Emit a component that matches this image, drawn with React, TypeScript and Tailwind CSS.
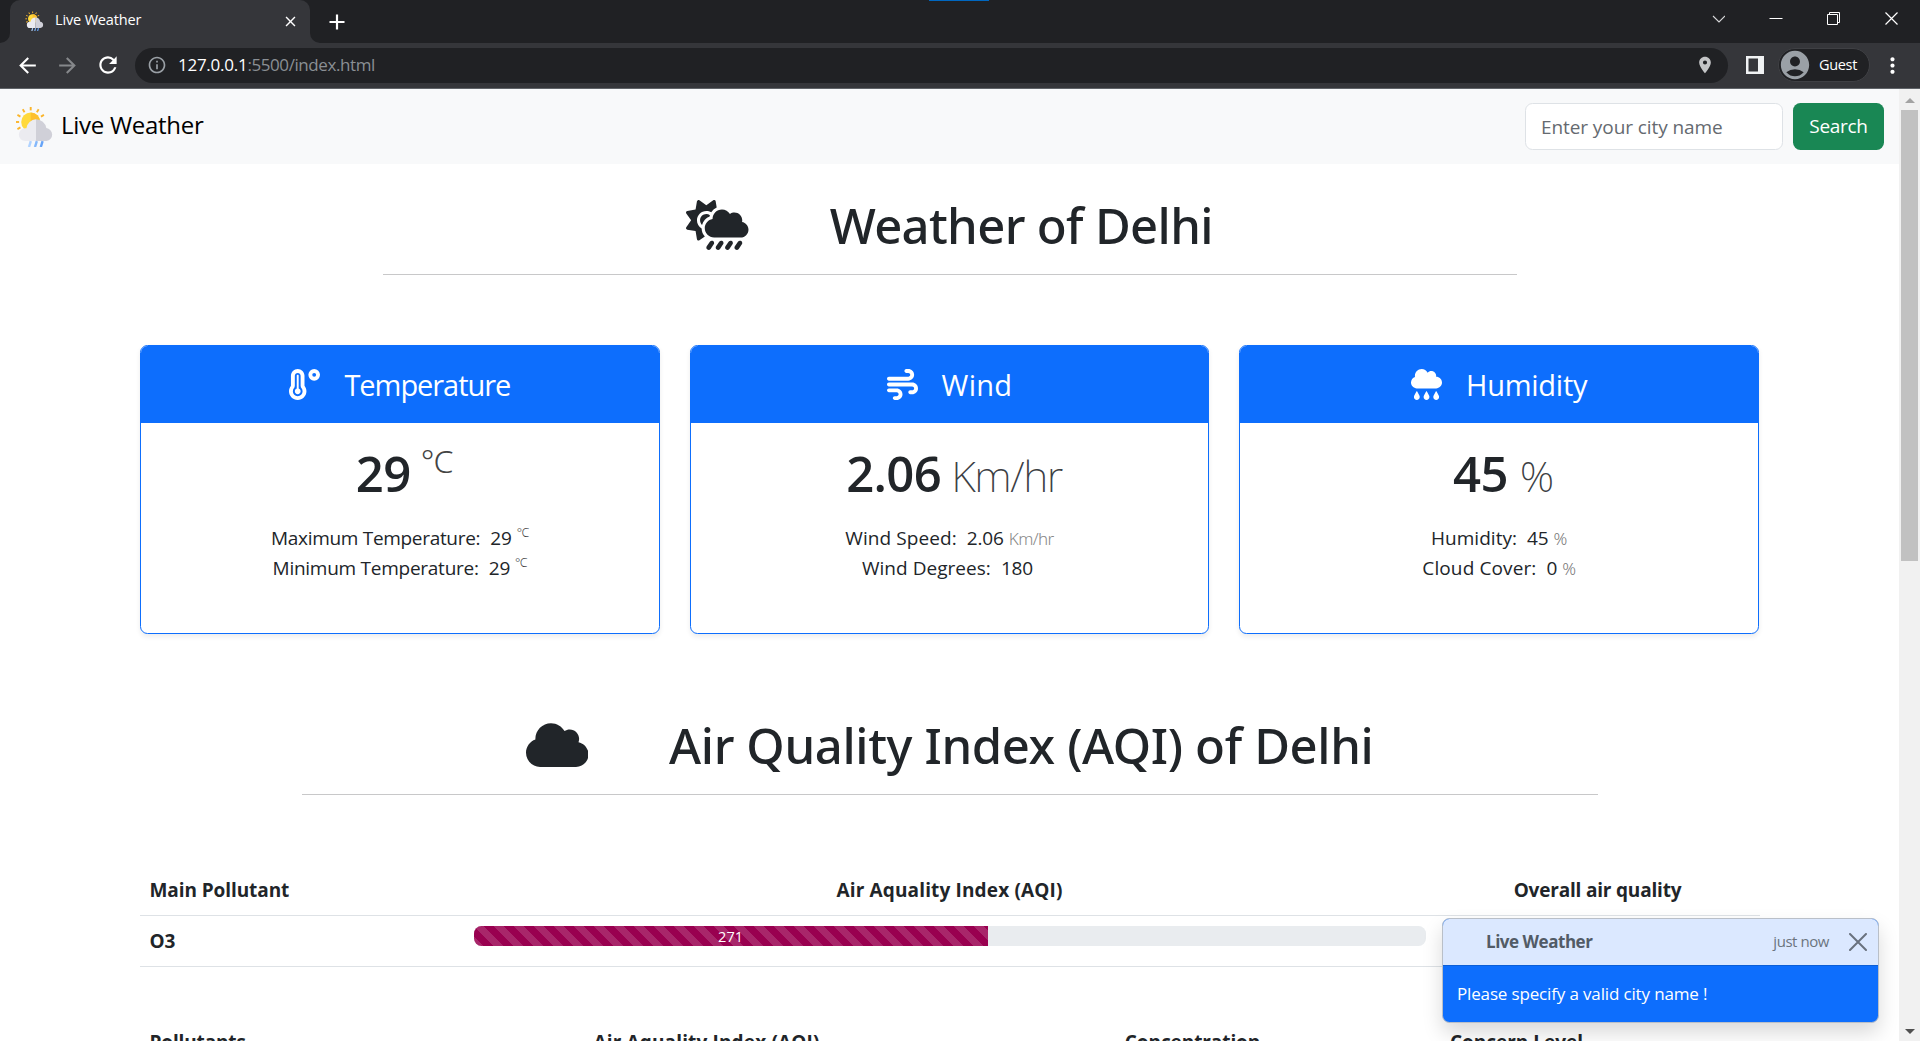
import React from "react";
import {
  FaCloud,
  FaCloudRain,
  FaCloudSunRain,
  FaTemperatureHigh,
  FaWind,
} from "react-icons/fa6";
import {
  MdAccountCircle,
  MdArrowBack,
  MdArrowForward,
  MdClose,
  MdLocationOn,
  MdMoreVert,
  MdOutlineInfo,
  MdRefresh,
} from "react-icons/md";

function WeatherLogo({ className }: { className: string }) {
  const rays = [-118, -90, -62, -32, 0, 32, 62];
  return (
    <svg viewBox="0 0 37 41" className={className} aria-hidden="true">
      {rays.map((a) => (
        <path
          key={a}
          d="M14.7 1v3.4"
          stroke="#fbb52a"
          strokeWidth="1.9"
          transform={`rotate(${a} 14.7 16)`}
        />
      ))}
      <circle cx="14.7" cy="16" r="9.5" fill="#ffd93b" />
      <path d="M14.7 6.5a9.5 9.5 0 0 1 0 19z" fill="#fdbf2d" />
      <path
        d="M9.3 35a6.4 6.4 0 0 1-.2-12.8 3 3 0 0 1 1.3 0A10.3 10.3 0 0 1 20 13.3V35z"
        fill="#ebebf0"
      />
      <path
        d="M20 13.3a10.5 10.5 0 0 1 10.3 8.8 6.5 6.5 0 0 1 .3 12.9H20z"
        fill="#d0d0d8"
      />
      <path d="M14.8 35.2 13 41" stroke="#b0d3ff" strokeWidth="2.4" />
      <path d="M20.8 35.2 19 41" stroke="#84b8fb" strokeWidth="2.4" />
      <path d="M26.6 35.2 24.8 41" stroke="#66a4f8" strokeWidth="2.4" />
    </svg>
  );
}

function TabStrip() {
  return (
    <div className="relative flex h-[43px] shrink-0 items-center bg-[#202124]">
      <div className="absolute left-[929px] top-0 h-px w-[60px] bg-[#0067c0]" />
      <svg viewBox="0 0 10 10" className="size-2.5 self-end" aria-hidden="true">
        <path d="M10 0v10H0A10 10 0 0 0 10 0z" fill="#35363a" />
      </svg>
      <div className="flex h-full w-[300px] items-center rounded-t-[10px] bg-[#35363a] pb-px pl-[15px] pr-[11px]">
        <WeatherLogo className="h-5 w-[19px]" />
        <span className="mb-0.5 ml-[11px] grow text-[14.5px] tracking-[-0.15px] text-white">Live Weather</span>
        <MdClose className="size-[17px] text-white" />
      </div>
      <svg viewBox="0 0 10 10" className="size-2.5 self-end" aria-hidden="true">
        <path d="M0 0v10h10A10 10 0 0 1 0 0z" fill="#35363a" />
      </svg>
      <svg viewBox="0 0 16 16" className="ml-[9px] size-4" aria-hidden="true">
        <path d="M8 .5v15M.5 8h15" stroke="#fff" strokeWidth="2.2" />
      </svg>
      <div className="ml-auto flex items-center gap-11 pb-[5px] pr-[21px]">
        <svg viewBox="0 0 14 14" className="size-3.5" aria-hidden="true">
          <path d="M2 4l6 6 6-6" fill="none" stroke="#d8d9db" strokeWidth="1.1" />
        </svg>
        <svg viewBox="0 0 14 14" className="size-3.5" aria-hidden="true">
          <path d="M0.5 6.5h13" stroke="#fff" />
        </svg>
        <svg viewBox="0 0 14 14" className="size-3.5" aria-hidden="true">
          <path d="M.5 2.5h10v10H.5zM2.5 2V.5h10v10H11" fill="none" stroke="#fff" />
        </svg>
        <svg viewBox="0 0 14 14" className="size-3.5" aria-hidden="true">
          <path d="M.5.5l12 12M12.5.5l-12 12" stroke="#fff" strokeWidth="1.2" />
        </svg>
      </div>
    </div>
  );
}

function Toolbar() {
  return (
    <div className="flex h-[46px] shrink-0 items-center border-b border-[#5f6368] bg-[#35363a] px-[15px] pb-px">
      <MdArrowBack className="size-[25px] text-white" />
      <MdArrowForward className="ml-[15px] size-[25px] text-[#86888b]" />
      <MdRefresh className="ml-[15px] size-[26px] text-white" />
      <div className="ml-[14px] flex h-[35px] w-[1594px] items-center rounded-full bg-[#202124] pl-3 pr-[13px]">
        <MdOutlineInfo className="size-5 text-[#9aa0a6]" />
        <span className="ml-[11px] text-[17px] tracking-[-0.25px] text-white">127.0.0.1</span>
        <span className="grow text-[17px] tracking-[-0.42px] text-[#8a8f94]">:5500/index.html</span>
        <MdLocationOn className="size-5 text-[#c4c5c7]" />
      </div>
      <svg viewBox="0 0 18 18" className="ml-[18px] size-[18px]" aria-hidden="true">
        <path d="M0 0h18v18H0zM2.5 2.5v13H12v-13z" fill="#f1f3f4" fillRule="evenodd" />
      </svg>
      <div className="ml-3.5 flex h-[34px] w-[92px] items-center rounded-full border border-[#3f4044] bg-[#202124]">
        <MdAccountCircle className="-ml-px size-[34px] shrink-0 text-[#9aa0a6]" />
        <span className="ml-[7px] text-[14.5px] tracking-[-0.35px] text-white">Guest</span>
      </div>
      <MdMoreVert className="ml-2.5 size-[25px] shrink-0 text-white" />
    </div>
  );
}

function Navbar() {
  return (
    <nav className="flex h-[75px] items-center bg-[#f8f9fa] pl-4 pr-[15px]">
      <WeatherLogo className="h-[41px] w-[37px]" />
      <span className="mb-1 ml-2 grow text-[24px] tracking-[-0.28px] text-black">Live Weather</span>
      <input
        className="h-[47px] w-[258px] rounded-[7.5px] border border-[#dee2e6] bg-white px-[15px] text-[19px] tracking-[-0.08px] placeholder:text-[#656a70]"
        placeholder="Enter your city name"
      />
      <button className="ml-2.5 h-[47px] w-[91px] rounded-[7.5px] bg-[#198754] text-[19px] tracking-[-0.3px] text-white">
        Search
      </button>
    </nav>
  );
}

type HeadingProps = { icon: React.ReactNode; title: string; width: string; tracking: string };

function SectionHeading({ icon, title, width, tracking }: HeadingProps) {
  return (
    <header className="flex flex-col items-center">
      <div className="flex h-[60px] items-center gap-[81px]">
        {icon}
        <h1 className={`font-['Noto_Sans'] text-[49px] font-medium leading-[60px] ${tracking}`}>{title}</h1>
      </div>
      <hr className={`mt-[19px] h-px border-0 bg-[#c8c8c9] ${width}`} />
    </header>
  );
}

const unit = "font-['Noto_Sans'] font-extralight";
const smallUnit = "font-['Noto_Sans'] font-light";

type Row = { label: string; value: string; suffix?: React.ReactNode; tracking: string };

function WeatherCard({
  icon,
  title,
  titleTracking,
  value,
  valueUnit,
  rows,
}: {
  icon: React.ReactNode;
  title: string;
  titleTracking: string;
  value: string;
  valueUnit: React.ReactNode;
  rows: Row[];
}) {
  return (
    <section className="h-[289px] overflow-hidden rounded-[7.5px] border border-[#0d6efd] bg-white shadow-[0_2.5px_5px_rgba(0,0,0,0.075)]">
      <div className="flex h-[77px] items-center justify-center gap-6 bg-[#0d6efd] text-white">
        {icon}
        <h4 className={`text-[29px] ${titleTracking}`}>{title}</h4>
      </div>
      <div className="flex flex-col items-center pt-5">
        <div className="mb-5 flex h-[60px] items-baseline pl-[9px] leading-[60px]">
          <span className="text-[49px] font-semibold tracking-[-0.6px]">{value}</span>
          {valueUnit}
        </div>
        {rows.map((row) => (
          <div key={row.label} className="flex h-[30px] items-baseline leading-[30px]">
            <span className={`text-[19px] ${row.tracking}`}>{row.label}</span>
            <span className="ml-2.5 text-[19px] tracking-[-0.15px]">{row.value}</span>
            {row.suffix}
          </div>
        ))}
      </div>
    </section>
  );
}

const smallDegree = (
  <span className={`relative -top-2 ml-[5px] text-[12.5px] tracking-[-0.6px] text-[#444] ${smallUnit}`}>°C</span>
);
const smallPercent = <span className={`ml-[5px] text-[17px] text-[#777] ${smallUnit}`}>%</span>;

function AqiTables() {
  return (
    <div className="mx-auto w-[1620px] text-[19px] font-bold leading-[30px]">
      <div className="grid h-[51px] grid-cols-[324px_972px_324px] border-b border-[#dee2e6] pt-2.5 text-center">
        <span className="pl-2.5 text-left tracking-[-0.08px]">Main Pollutant</span>
        <span className="tracking-[0.15px]">Air Aquality Index (AQI)</span>
        <span className="tracking-[-0.19px]">Overall air quality</span>
      </div>
      <div className="grid h-[51px] grid-cols-[324px_972px_324px] border-b border-[#dee2e6] pt-2.5">
        <span className="pl-2.5 tracking-[-0.12px]">O3</span>
        <div className="mx-2.5 h-5 overflow-hidden rounded-[7.5px] bg-[#e9ecef]">
          <div className="h-full w-[54%] bg-[#990050] bg-[linear-gradient(45deg,rgba(255,255,255,0.15)_25%,transparent_25%,transparent_50%,rgba(255,255,255,0.15)_50%,rgba(255,255,255,0.15)_75%,transparent_75%,transparent)] bg-[length:20px_20px] text-center text-[14.5px] font-normal leading-[21px] text-white">
            271
          </div>
        </div>
      </div>
      <div className="mt-[50px] grid h-[51px] grid-cols-[324px_486px_486px_162px] pt-2.5 text-center">
        <span className="pl-2.5 text-left tracking-[-0.14px]">Pollutants</span>
        <span className="tracking-[0.15px]">Air Aquality Index (AQI)</span>
        <span className="tracking-[-0.08px]">Concentration</span>
        <span>Concern Level</span>
      </div>
    </div>
  );
}

function Toast() {
  return (
    <div className="absolute bottom-[18px] right-[41px] w-[437px] overflow-hidden rounded-[7.5px] border border-[#b9bfc8] bg-[#0d6efd] shadow-[0_10px_20px_rgba(0,0,0,0.15)]">
      <div className="flex h-[47px] items-center border-b border-[#0b5ed7] bg-[#dbe8ff] pl-[43px] pr-[11px]">
        <span className="grow text-[17px] font-bold tracking-[-0.46px] text-[#525b66]">Live Weather</span>
        <span className="mb-0.5 text-[15px] tracking-[-0.44px] text-[#6b747e]">just now</span>
        <svg viewBox="0 0 18 18" className="ml-5 size-[18px]" aria-hidden="true">
          <path d="M1 1l16 16M17 1 1 17" stroke="#69717e" strokeWidth="2" strokeLinecap="round" />
        </svg>
      </div>
      <div className="flex h-[56px] items-center pl-3.5 text-[17px] tracking-[-0.15px] text-white">
        <span>Please specify a valid city name !</span>
      </div>
    </div>
  );
}

function Scrollbar() {
  return (
    <div className="flex w-[21px] flex-col items-center justify-between bg-[#f1f1f1]">
      <div className="flex flex-col items-center">
        <svg viewBox="0 0 10 21" className="h-[21px] w-[10px]" aria-hidden="true">
          <path d="M5 9l5 5H0z" fill="#a3a3a3" />
        </svg>
        <div className="h-[451px] w-[17px] bg-[#c1c1c1]" />
      </div>
      <svg viewBox="0 0 10 20" className="h-5 w-[10px]" aria-hidden="true">
        <path d="M0 8h10l-5 5z" fill="#505050" />
      </svg>
    </div>
  );
}

export default function App() {
  return (
    <div className="relative flex h-[1041px] w-[1920px] flex-col overflow-hidden bg-white font-['Open_Sans',sans-serif] text-[#212529]">
      <TabStrip />
      <Toolbar />
      <div className="flex min-h-0 flex-1">
        <main className="grow overflow-hidden">
          <Navbar />
          <div className="pt-[31px]">
            <SectionHeading
              icon={<FaCloudSunRain className="h-[50px] w-[62.5px]" />}
              title="Weather of Delhi"
              width="w-[1134px]"
              tracking="tracking-[-0.66px]"
            />
          </div>
          <div className="ml-[140px] mt-[70px] grid w-[1619px] grid-cols-3 gap-[30px]">
            <WeatherCard
              icon={<FaTemperatureHigh className="size-[31px]" />}
              title="Temperature"
              titleTracking="tracking-[-1.05px]"
              value="29"
              valueUnit={
                <span className={`relative -top-[19px] ml-2.5 text-[32px] tracking-[-0.7px] ${smallUnit} text-[#444]`}>°C</span>
              }
              rows={[
                { label: "Maximum Temperature:", value: "29", suffix: smallDegree, tracking: "tracking-[-0.31px]" },
                { label: "Minimum Temperature:", value: "29", suffix: smallDegree, tracking: "tracking-[-0.26px]" },
              ]}
            />
            <WeatherCard
              icon={<FaWind className="size-[31px]" />}
              title="Wind"
              titleTracking="tracking-[0.3px]"
              value="2.06"
              valueUnit={<span className={`ml-2.5 text-[43px] tracking-[-1.4px] text-[#3c4044] ${unit}`}>Km/hr</span>}
              rows={[
                {
                  label: "Wind Speed:",
                  value: "2.06",
                  suffix: <span className={`ml-[5px] text-[17px] tracking-[-0.6px] text-[#888] ${smallUnit}`}>Km/hr</span>,
                  tracking: "tracking-[0.09px]",
                },
                { label: "Wind Degrees:", value: "180", suffix: <span className="w-1" />, tracking: "tracking-[0.04px]" },
              ]}
            />
            <WeatherCard
              icon={<FaCloudRain className="size-[31px]" />}
              title="Humidity"
              titleTracking="tracking-[-0.25px]"
              value="45"
              valueUnit={<span className={`ml-3 text-[43px] text-[#3c4044] ${unit}`}>%</span>}
              rows={[
                { label: "Humidity:", value: "45", suffix: smallPercent, tracking: "tracking-[0.03px]" },
                { label: "Cloud Cover:", value: "0", suffix: smallPercent, tracking: "tracking-[0.12px]" },
              ]}
            />
          </div>
          <div className="pb-[70px] pt-[81px]">
            <SectionHeading
              icon={<FaCloud className="h-[50px] w-[62.5px]" />}
              title="Air Quality Index (AQI) of Delhi"
              width="w-[1296px]"
              tracking="tracking-[-0.37px]"
            />
          </div>
          <AqiTables />
        </main>
        <Scrollbar />
      </div>
      <Toast />
    </div>
  );
}
